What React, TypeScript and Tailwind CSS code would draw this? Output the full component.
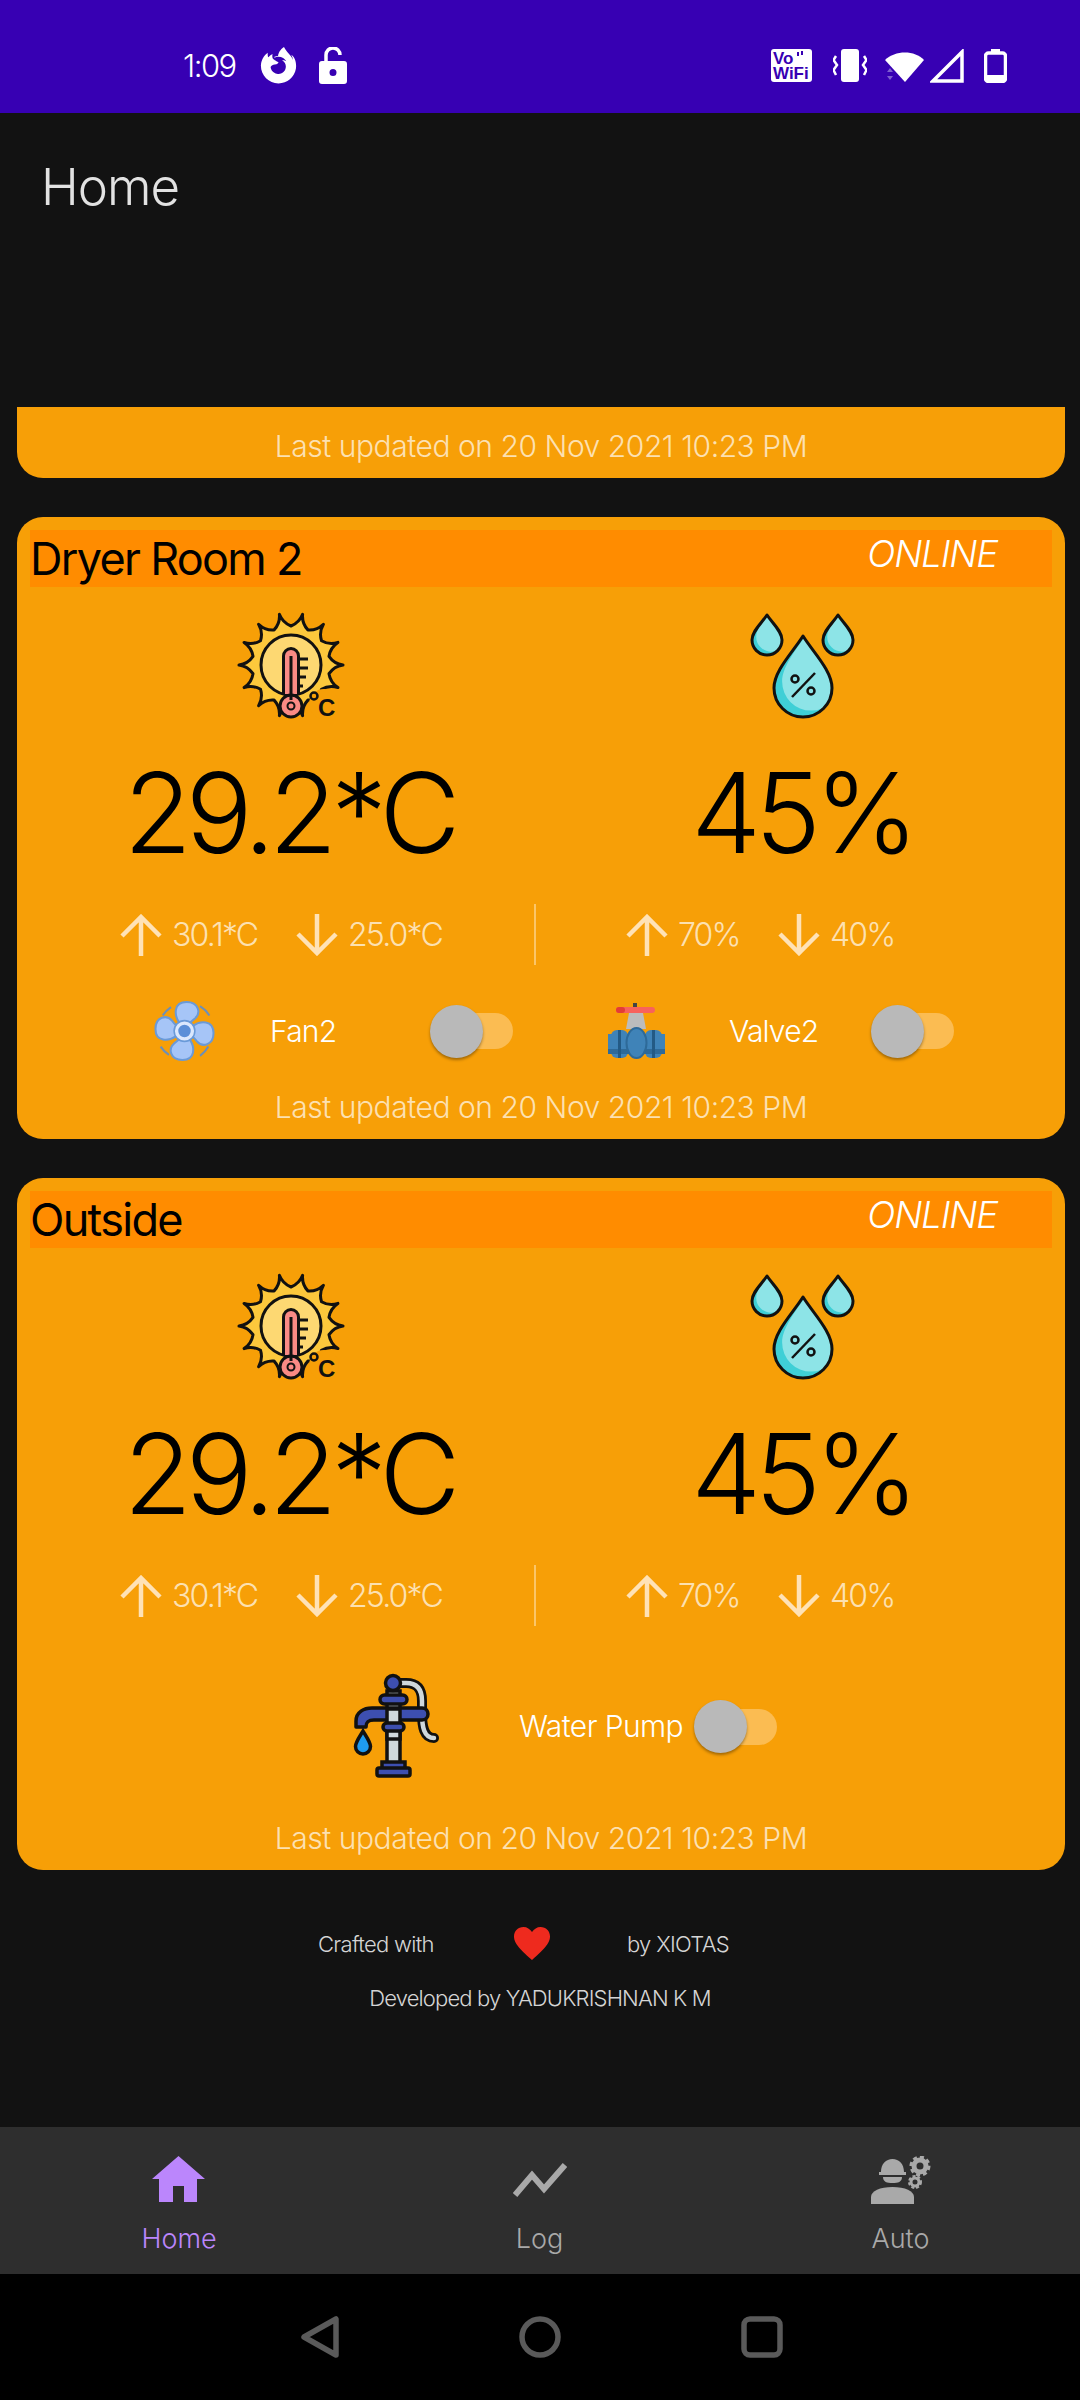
import React from 'react';
import { FaFirefoxBrowser } from 'react-icons/fa';

const sunPath = (() => {
  const cx = 55;
  const cy = 55;
  const rays = 14;
  let d = '';
  for (let i = 0; i < rays; i++) {
    const a0 = (i / rays) * Math.PI * 2;
    const a1 = ((i + 0.5) / rays) * Math.PI * 2;
    const a2 = ((i + 1) / rays) * Math.PI * 2;
    const pt = (a: number, r: number) => `${(cx + Math.cos(a) * r).toFixed(1)} ${(cy + Math.sin(a) * r).toFixed(1)}`;
    if (i === 0) d += `M${pt(a0, 52)}`;
    d += ` Q${pt(a0 + 0.03, 43)} ${pt(a1, 39)} Q${pt(a2 - 0.03, 43)} ${pt(a2, 52)}`;
  }
  return d + 'Z';
})();

const dropPath = (cx: number, top: number, bottom: number, r: number) => {
  const cy = bottom - r;
  const h = bottom - top;
  return `M${cx} ${top} C${cx + r * 0.35} ${top + h * 0.2} ${cx + r} ${cy - r * 0.6} ${cx + r} ${cy} A${r} ${r} 0 0 1 ${cx - r} ${cy} C${cx - r} ${cy - r * 0.6} ${cx - r * 0.35} ${top + h * 0.2} ${cx} ${top}Z`;
};

const SunIcon = () => (
  <svg width="110" height="110" viewBox="0 0 110 110">
    <path d={sunPath} fill="#fcc83c" stroke="#111" strokeWidth="3" strokeLinejoin="round" />
    <circle cx="55" cy="55" r="30" fill="#fdd872" stroke="#111" strokeWidth="3" />
    <circle cx="88" cy="94" r="15" fill="#f79f07" />
    <path d="M47.500 84V46a7.500 7.500 0 0 1 15 0V84" fill="#f98a85" stroke="#111" strokeWidth="3" />
    <circle cx="55" cy="96" r="11" fill="#f98a85" stroke="#111" strokeWidth="3" />
    <circle cx="55" cy="96" r="3.500" fill="none" stroke="#111" strokeWidth="2" />
    <rect x="53.500" y="46" width="3" height="44" fill="#111" />
    <path d="M62 49H72M62 58H72M62 67H70M62 76H67" stroke="#111" strokeWidth="3" />
    <circle cx="78" cy="86" r="3.500" fill="none" stroke="#111" strokeWidth="2.500" />
    <text x="82" y="106" fontSize="24" fontWeight="700" fill="#111" fontFamily="Liberation Sans">C</text>
  </svg>
);

const Drop = ({ cx, top, bottom, r }: { cx: number; top: number; bottom: number; r: number }) => {
  const id = `drop-${cx}`;
  return (
    <g>
      <clipPath id={id}>
        <path d={dropPath(cx, top, bottom, r)} />
      </clipPath>
      <path d={dropPath(cx, top, bottom, r)} fill="#3fcfd6" />
      <g clipPath={`url(#${id})`}>
        <path d={dropPath(cx + r * 0.28, top - r * 0.3, bottom - r * 0.22, r)} fill="#8de4e7" />
      </g>
      <path d={dropPath(cx, top, bottom, r)} fill="none" stroke="#111" strokeWidth="3" strokeLinejoin="round" />
    </g>
  );
};

const DropsIcon = () => (
  <svg width="110" height="110" viewBox="0 0 110 110">
    <Drop cx={18} top={5} bottom={45} r={15} />
    <Drop cx={89} top={5} bottom={45} r={15} />
    <Drop cx={54} top={26} bottom={107} r={29} />
    <circle cx="46" cy="69" r="3.500" fill="none" stroke="#111" strokeWidth="2.500" />
    <circle cx="62" cy="81" r="3.500" fill="none" stroke="#111" strokeWidth="2.500" />
    <path d="M66 63L43 87" stroke="#111" strokeWidth="2.500" />
  </svg>
);

const FanIcon = () => (
  <svg width="57" height="56" viewBox="3 3 54 54" className="overflow-visible">
    <path d="M9 15A29 29 0 0 1 17 7M45 6A29 29 0 0 1 54 15M53 45A29 29 0 0 1 45 54M15 53A29 29 0 0 1 7 45" fill="none" stroke="#6d8fb8" strokeWidth="2" />
    {[0, 90, 180, 270].map((r) => (
      <path
        key={r}
        transform={`rotate(${r} 30 30)`}
        d="M25 22C20 15 19 2 32 2C44 2 46 13 40 18C36 21 35 22 35 23Z"
        fill="#a6c5f7"
        stroke="#6a9ad8"
        strokeWidth="2"
      />
    ))}
    <circle cx="30" cy="30" r="8" fill="#5b8fd8" stroke="#dbe8fd" strokeWidth="4" />
    <circle cx="30" cy="30" r="10" fill="none" stroke="#6a9ad8" strokeWidth="1.500" />
  </svg>
);

const ValveIcon = () => (
  <svg width="57" height="56" viewBox="0 0 57 56">
    <rect x="25" y="0" width="4" height="8" fill="#444" />
    <path d="M21 10H35L38 26H18Z" fill="#bcbcbc" />
    <rect x="8" y="4" width="39" height="6" rx="3" fill="#f8625c" />
    <rect x="8" y="4" width="9" height="6" rx="3" fill="#e33d36" />
    <rect x="0" y="31" width="57" height="20" fill="#3f83b8" />
    <rect x="3" y="27" width="17" height="28" rx="6" fill="#3f83b8" />
    <rect x="37" y="27" width="17" height="28" rx="6" fill="#3f83b8" />
    <rect x="0" y="46" width="57" height="5" fill="#2e6a99" />
    <rect x="10" y="27" width="3" height="28" fill="#235a85" />
    <rect x="44" y="27" width="3" height="28" fill="#235a85" />
    <ellipse cx="28.500" cy="40" rx="10" ry="15" fill="#3f83b8" stroke="#2e6a99" strokeWidth="2" />
  </svg>
);

const PumpIcon = () => (
  <svg width="100" height="115" viewBox="0 0 100 115">
    <path d="M48 14H56C70 14 72 24 72 32V44C72 58 74 69 84 69" fill="none" stroke="#111" strokeWidth="10" strokeLinecap="round" />
    <path d="M48 14H56C70 14 72 24 72 32V44C72 58 74 69 84 69" fill="none" stroke="#cfd8dc" strokeWidth="4.500" strokeLinecap="round" />
    <rect x="37" y="22" width="13" height="72" fill="#cfd8dc" stroke="#111" strokeWidth="3.500" />
    <path d="M6 58V52C6 43 14 39 22 39H72C80 39 80 51 72 51H24C18 51 16 53 16 58Z" fill="#3d4fb0" stroke="#111" strokeWidth="3.500" strokeLinejoin="round" />
    <rect x="37" y="40" width="13" height="30" fill="#cfd8dc" stroke="#111" strokeWidth="3.500" />
    <rect x="30" y="26" width="27" height="9" rx="4.500" fill="#3d4fb0" stroke="#111" strokeWidth="3.500" />
    <rect x="33" y="54" width="21" height="8" rx="4" fill="#3d4fb0" stroke="#111" strokeWidth="3.500" />
    <circle cx="43" cy="14" r="7.500" fill="#3d4fb0" stroke="#111" strokeWidth="3.500" />
    <path d="M32 100V93H55V100Z" fill="#3d4fb0" stroke="#111" strokeWidth="3.500" />
    <rect x="27" y="99" width="33" height="8" rx="2" fill="#3d4fb0" stroke="#111" strokeWidth="3.500" />
    <path d={dropPath(13, 62, 85, 7.500)} fill="#1e9bf0" stroke="#111" strokeWidth="3.500" />
  </svg>
);

const ArrowUpIcon = () => (
  <svg width="42" height="42" viewBox="0 0 42 42" fill="none" stroke="#ffe2b6" strokeWidth="4.500">
    <path d="M21 42V4M2 22L21 3L40 22" />
  </svg>
);

const ArrowDownIcon = () => (
  <svg width="42" height="42" viewBox="0 0 42 42" fill="none" stroke="#ffe2b6" strokeWidth="4.500">
    <path d="M21 0V38M2 20L21 39L40 20" />
  </svg>
);

const Toggle = () => (
  <div className="relative w-[83px] h-[53px] shrink-0 flex items-center justify-end">
    <div className="w-[78px] h-[36px] rounded-full bg-[#fbbc52]" />
    <div className="absolute left-0 top-0 w-[53px] h-[53px] rounded-full bg-[#b9b9b9] shadow-[0_2px_3px_rgba(0,0,0,0.35)]" />
  </div>
);

const Updated = () => (
  <div className="h-[40px] flex items-center justify-center text-[30px] leading-[40px] text-white/70 font-light tracking-[-0.45px]">
    Last updated on 20 Nov 2021 10:23 PM
  </div>
);

const Stats = () => (
  <div className="mt-[36px] h-[61px] flex items-center text-[32px] text-white/70 font-light tracking-[-1.8px]">
    <div className="w-[517px] pl-[103px] flex items-center">
      <ArrowUpIcon />
      <span className="ml-[10px] w-[124px]">30.1*C</span>
      <ArrowDownIcon />
      <span className="ml-[10px]">25.0*C</span>
    </div>
    <div className="w-[2px] h-full bg-[#fbc568]" />
    <div className="pl-[90px] flex items-center">
      <ArrowUpIcon />
      <span className="ml-[10px] w-[100px]">70%</span>
      <ArrowDownIcon />
      <span className="ml-[10px]">40%</span>
    </div>
  </div>
);

const Metrics = () => (
  <div className="grid grid-cols-[548px_478px] mt-[23px]">
    <div className="flex flex-col items-center">
      <SunIcon />
      <div className="mt-[37px] pr-[4px] text-[111px] leading-[111px] font-light text-black tracking-[-6px]">29.2*C</div>
    </div>
    <div className="flex flex-col items-center">
      <DropsIcon />
      <div className="mt-[37px] pr-[4px] text-[111px] leading-[111px] font-light text-black tracking-[-6px]">45%</div>
    </div>
  </div>
);

const RoomCard = ({ name, children, mt, pb }: { name: string; children: React.ReactNode; mt: string; pb: string }) => (
  <div className={`ml-[17px] mr-[15px] mt-[39px] bg-[#f79f07] rounded-[26px] flex flex-col ${pb}`}>
    <div className="mx-[13px] mt-[13px] h-[57px] bg-[#ff8c00] flex items-center justify-between pr-[55px]">
      <span className="text-[45px] leading-[57px] text-black tracking-[-1.7px]">{name}</span>
      <span className="text-[37px] leading-[50px] italic font-light text-white tracking-[-1.2px] -mt-[9px]">ONLINE</span>
    </div>
    <Metrics />
    <Stats />
    {children}
    <div className={mt}>
      <Updated />
    </div>
  </div>
);

const StatusBar = () => (
  <div className="h-[113px] bg-[#3700b3] flex items-center justify-between pt-[18px] pl-[183px] pr-[73px] text-white shrink-0">
    <div className="flex items-center">
      <span className="text-[31px] leading-none font-light tracking-[-1.5px] w-[77px]">1:09</span>
      <FaFirefoxBrowser size={37} className="text-white" />
      <svg className="ml-[22px]" width="28" height="37" viewBox="0 0 28 37" fill="white">
        <path d="M7 15V8A7 7 0 0 1 21 8" fill="none" stroke="white" strokeWidth="3.500" />
        <path fillRule="evenodd" d="M3 14H25A3 3 0 0 1 28 17V34A3 3 0 0 1 25 37H3A3 3 0 0 1 0 34V17A3 3 0 0 1 3 14ZM14 22A3.500 3.500 0 1 0 14 29A3.500 3.500 0 1 0 14 22Z" />
      </svg>
    </div>
    <div className="flex items-center">
      <div className="w-[41px] h-[33px] bg-white rounded-[3px] flex flex-col justify-center pl-[2px] text-[#3700b3] text-[17px] leading-[15px] font-black font-['Liberation_Sans',sans-serif]">
        <div className="flex items-start">
          <span>Vo</span>
          <svg className="ml-[3px]" width="8" height="8" viewBox="0 0 8 8" fill="none" stroke="#3700b3" strokeWidth="2">
            <path d="M2 1V5M6 0V4" />
          </svg>
        </div>
        <span>WiFi</span>
      </div>
      <svg className="ml-[21px]" width="34" height="33" viewBox="0 0 34 33" fill="none">
        <rect x="8" y="0" width="18" height="33" rx="3" fill="white" />
        <path d="M3 7L0.500 11L4 16L0.500 21L3 26M31 7L33.500 11L30 16L33.500 21L31 26" stroke="white" strokeWidth="2.500" />
      </svg>
      <svg className="ml-[18px]" width="40" height="34" viewBox="0 0 40 34" fill="white">
        <path d="M0 11C10 1 30 1 39 11L20 33Z" />
        <path d="M2 23L5 19L8 23ZM2 27L5 31L8 27Z" fill="#7f5fd0" />
      </svg>
      <svg className="ml-[5px]" width="34" height="34" viewBox="0 0 34 34" fill="none" stroke="white" strokeWidth="3.500">
        <path d="M32 3V32H3Z" />
      </svg>
      <svg className="ml-[20px]" width="23" height="34" viewBox="0 0 23 34" fill="none">
        <rect x="7" y="0" width="9" height="4" fill="white" />
        <rect x="1.500" y="4" width="20" height="28.500" rx="3" stroke="white" strokeWidth="3.500" />
        <rect x="1.500" y="26" width="20" height="7" rx="2" fill="white" />
      </svg>
    </div>
  </div>
);

const Footer = () => (
  <div className="text-[#d5d5d5] text-[22px] leading-[36px] font-light tracking-[-0.7px]">
    <div className="mt-[56px] h-[36px] flex items-center pl-[318px]">
      <span className="w-[196px]">Crafted with</span>
      <svg className="w-[113px]" width="36" height="34" viewBox="0 0 113 34" preserveAspectRatio="xMinYMid meet">
        <path d="M18 33C4 21 0 15 0 9.500C0 4 4 0 9.500 0C13 0 16 2 18 5C20 2 23 0 26.500 0C32 0 36 4 36 9.500C36 15 32 21 18 33Z" fill="#ee2a1e" />
      </svg>
      <span>by XIOTAS</span>
    </div>
    <div className="mt-[18px] h-[36px] flex items-center justify-center tracking-[-0.85px]">Developed by YADUKRISHNAN K M</div>
  </div>
);

const BottomNav = () => (
  <div className="h-[147px] bg-[#2e2e2e] grid grid-cols-[358px_363px_359px] shrink-0 text-[27px] leading-[34px] font-light tracking-[0px] text-[#a9a9a9]">
    <div className="flex flex-col items-center pt-[29px] text-[#bb86fc]">
      <svg width="54" height="46" viewBox="0 0 54 46" fill="#bb86fc">
        <path fillRule="evenodd" d="M26.500 0L53 23H45V46H32V30H21V46H7V23H0Z" />
      </svg>
      <span className="mt-[20px]">Home</span>
    </div>
    <div className="flex flex-col items-center pt-[29px]">
      <svg width="54" height="46" viewBox="0 0 54 46" fill="none" stroke="#a9a9a9" strokeWidth="6">
        <path d="M2 39L19 19L31 33L52 9" />
      </svg>
      <span className="mt-[20px]">Log</span>
    </div>
    <div className="flex flex-col items-center pt-[29px]">
      <svg width="60" height="49" viewBox="0 0 60 49" fill="#a9a9a9" className="-mb-[3px]">
        <path d="M10 16C10 8 15 3 21.500 3C28 3 33 8 33 16H35V19H8V16Z" />
        <path d="M12 21H31C31 26 27 27 21.500 27C16 27 12 26 12 21Z" />
        <path d="M0 48V41C0 35 9 31 21.500 31C34 31 43 35 43 41V48Z" />
        <circle cx="49" cy="10" r="6" fill="none" stroke="#a9a9a9" strokeWidth="5" />
        <circle cx="49" cy="10" r="9" fill="none" stroke="#a9a9a9" strokeWidth="3" strokeDasharray="4 3" />
        <circle cx="44" cy="26" r="4" fill="none" stroke="#a9a9a9" strokeWidth="3" />
        <circle cx="44" cy="26" r="6" fill="none" stroke="#a9a9a9" strokeWidth="2" strokeDasharray="3 2" />
      </svg>
      <span className="mt-[20px]">Auto</span>
    </div>
  </div>
);

const NavBar = () => (
  <div className="h-[126px] bg-black flex items-start pt-[42px] pl-[301px] shrink-0">
    <svg width="38" height="42" viewBox="0 0 38 42" fill="none" stroke="#5a5a5a" strokeWidth="5.500" strokeLinejoin="round">
      <path d="M35 3V39L3 21Z" />
    </svg>
    <svg className="ml-[180px]" width="42" height="42" viewBox="0 0 42 42" fill="none" stroke="#5a5a5a" strokeWidth="5.500">
      <circle cx="21" cy="21" r="18" />
    </svg>
    <svg className="ml-[180px]" width="42" height="42" viewBox="0 0 42 42" fill="none" stroke="#5a5a5a" strokeWidth="5.500">
      <rect x="3" y="3" width="36" height="36" rx="6" />
    </svg>
  </div>
);

export default function App() {
  return (
    <div className="w-[1080px] h-[2400px] bg-[#121212] flex flex-col overflow-hidden font-['Inter',sans-serif]">
      <StatusBar />
      <div className="flex-1">
        <div className="h-[294px] pl-[41px] pt-[44px] text-[51px] leading-[60px] font-light tracking-[-1px] text-[#e2e2e2]">Home</div>

        <div className="ml-[17px] mr-[15px] bg-[#f79f07] rounded-b-[26px] pt-[19px] pb-[12px]">
          <Updated />
        </div>

        <RoomCard name="Dryer Room 2" mt="mt-[28px]" pb="pb-[12px]">
          <div className="mt-[38px] h-[56px] flex items-center pl-[139px] text-[30px] font-light text-white tracking-[-0.8px]">
            <FanIcon />
            <span className="ml-[57px] w-[160px]">Fan2</span>
            <Toggle />
            <div className="ml-[95px]">
              <ValveIcon />
            </div>
            <span className="ml-[64px] w-[142px]">Valve2</span>
            <Toggle />
          </div>
        </RoomCard>

        <RoomCard name="Outside" mt="mt-[40px]" pb="pb-[12px]">
          <div className="mt-[49px] h-[103px] flex items-center pl-[333px] text-[30px] font-light text-white tracking-[-0.6px]">
            <PumpIcon />
            <span className="ml-[69px] w-[175px]">Water Pump</span>
            <Toggle />
          </div>
        </RoomCard>

        <Footer />
      </div>
      <BottomNav />
      <NavBar />
    </div>
  );
}
